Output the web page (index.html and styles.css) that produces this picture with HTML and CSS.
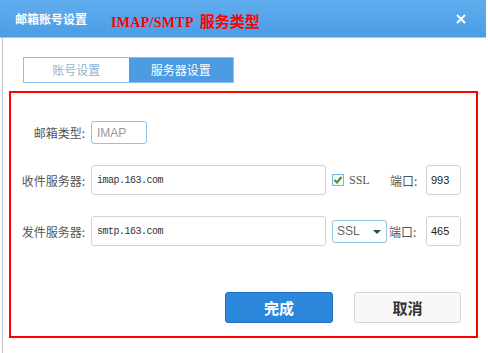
FILE: index.html
```html
<!DOCTYPE html>
<html lang="zh-CN">
<head>
  <meta charset="UTF-8" />
  <title>邮箱账号设置</title>
  <link rel="stylesheet" href="styles.css">
</head>
<body>

<div class="dialog">
  <div class="titlebar">
    <h1>邮箱账号设置</h1>
    <span class="subtitle">IMAP/SMTP <span class="subtitle-cn">服务类型</span></span>
    <svg class="close" width="10" height="10" viewBox="0 0 10 10">
      <path d="M1 1 L9 9 M9 1 L1 9" stroke="#fff" stroke-width="2" />
    </svg>
  </div>

  <div class="dialog-body">
    <div class="tabs">
      <a class="tab">账号设置</a>
      <a class="tab active">服务器设置</a>
    </div>

    <div class="panel">
      <div class="row row-type">
        <label class="row-label">邮箱类型:</label>
        <input type="text" class="field field-type" value="IMAP" />
      </div>

      <div class="row">
        <label class="row-label">收件服务器:</label>
        <input type="text" class="field field-host" value="imap.163.com" />
        <span class="ssl-opt">
          <span class="check">
            <svg width="10" height="10" viewBox="0 0 10 10">
              <path d="M1.5 5 L4 7.5 L8.5 2" stroke="#3a9a1c" stroke-width="2" fill="none" />
            </svg>
          </span>
          SSL
        </span>
        <span class="port-label">端口:</span>
        <input type="text" class="field field-port" value="993" />
      </div>

      <div class="row">
        <label class="row-label">发件服务器:</label>
        <input type="text" class="field field-host" value="smtp.163.com" />
        <span class="select">SSL<i class="caret"></i></span>
        <span class="port-label port-label-tight">端口:</span>
        <input type="text" class="field field-port" value="465" />
      </div>

      <div class="actions">
        <button class="btn btn-primary">完成</button>
        <button class="btn">取消</button>
      </div>
    </div>
  </div>
</div>

</body>
</html>
```

FILE: styles.css
```css
* {
  box-sizing: border-box;
}

body {
  margin: 0;
  background: #fff;
  font-family: "Noto Sans CJK SC", "Liberation Sans", sans-serif;
  font-size: 12px;
  color: #555;
}

.dialog {
  width: 486px;
  height: 353px;
}

.titlebar {
  height: 38px;
  display: flex;
  align-items: center;
  padding: 0 20px 0 15px;
  background: linear-gradient(#60adee, #4c9de6);
  border-bottom: 1px solid #9ccbf2;
}

.titlebar h1 {
  margin: 0;
  font-size: 12px;
  font-weight: bold;
  color: #fff;
}

.subtitle {
  margin-left: 24px;
  margin-top: 4px;
  font-family: "Liberation Serif", "Noto Sans CJK SC", serif;
  font-size: 14px;
  font-weight: bold;
  letter-spacing: 0.3px;
  color: #f00;
}

.subtitle-cn {
  margin-left: 3px;
  font-family: "Noto Sans CJK SC", serif;
  font-size: 15px;
  letter-spacing: 0;
}

.close {
  margin-left: auto;
}

.dialog-body {
  margin-left: 2px;
  height: 315px;
  border-left: 1px solid #c4c4c4;
  padding: 19px 0 0 6px;
}

.tabs {
  display: flex;
  margin-left: 14px;
  width: 211px;
  border: 1px solid #8fc0ea;
}

.tab {
  flex: 1;
  height: 24px;
  line-height: 24px;
  text-align: center;
  font-size: 12px;
  color: #8bb4d6;
  background: #fff;
}

.tab.active {
  background: #4c9be3;
  color: #fff;
}

.panel {
  margin-top: 8px;
  width: 469px;
  height: 247px;
  border: 2px solid #f00;
  padding: 28px 15px 0 0;
}

.row {
  display: flex;
  align-items: center;
  height: 30px;
  margin-bottom: 21px;
}

.row-type {
  height: 23px;
}

.row-label {
  width: 75px;
  margin-right: 5px;
  padding-right: 1px;
  text-align: right;
  font-size: 12px;
  color: #555;
}

.field {
  height: 30px;
  border: 1px solid #d2d2d2;
  border-radius: 3px;
  padding: 0 5px;
  background: #fff;
  color: #222;
  font-family: "Liberation Sans", sans-serif;
  font-size: 11px;
  outline: none;
}

.field-type {
  width: 56px;
  height: 23px;
  border-color: #8fc3e9;
  color: #999;
  font-size: 12px;
}

.field-host {
  width: 235px;
  font-family: "Liberation Mono", monospace;
  font-size: 10px;
  letter-spacing: -0.5px;
  color: #333;
}

.field-port {
  width: 35px;
  padding: 0 4px;
}

.ssl-opt {
  display: flex;
  align-items: center;
  width: 58px;
  margin-left: 6px;
  font-family: "Liberation Serif", serif;
  font-size: 12px;
  color: #555;
}

.check {
  display: inline-flex;
  align-items: center;
  justify-content: center;
  width: 12px;
  height: 12px;
  margin-right: 5px;
  border: 1px solid #7fb4dc;
  background: #f4f9fd;
}

.port-label {
  width: 36px;
  font-size: 12px;
  color: #555;
}

.port-label-tight {
  width: 37px;
}

.select {
  position: relative;
  display: flex;
  align-items: center;
  width: 55px;
  height: 23px;
  margin-left: 6px;
  margin-right: 2px;
  padding-left: 4px;
  border: 1px solid #8fc3e9;
  border-radius: 3px;
  font-family: "Liberation Sans", sans-serif;
  font-size: 12px;
  color: #666;
}

.caret {
  position: absolute;
  right: 5px;
  top: 9px;
  border-left: 4px solid transparent;
  border-right: 4px solid transparent;
  border-top: 4px solid #2a4a5a;
}

.actions {
  display: flex;
  justify-content: flex-end;
  gap: 21px;
  margin-top: 46px;
}

.btn {
  width: 107px;
  height: 31px;
  border: 1px solid #d6d6d6;
  border-radius: 3px;
  background: #f8f8f8;
  color: #333;
  font-family: "Noto Sans CJK SC", sans-serif;
  font-size: 15px;
  font-weight: bold;
}

.btn-primary {
  width: 108px;
  border-color: #1f70c0;
  background: #2b87dc;
  color: #fff;
}
```
